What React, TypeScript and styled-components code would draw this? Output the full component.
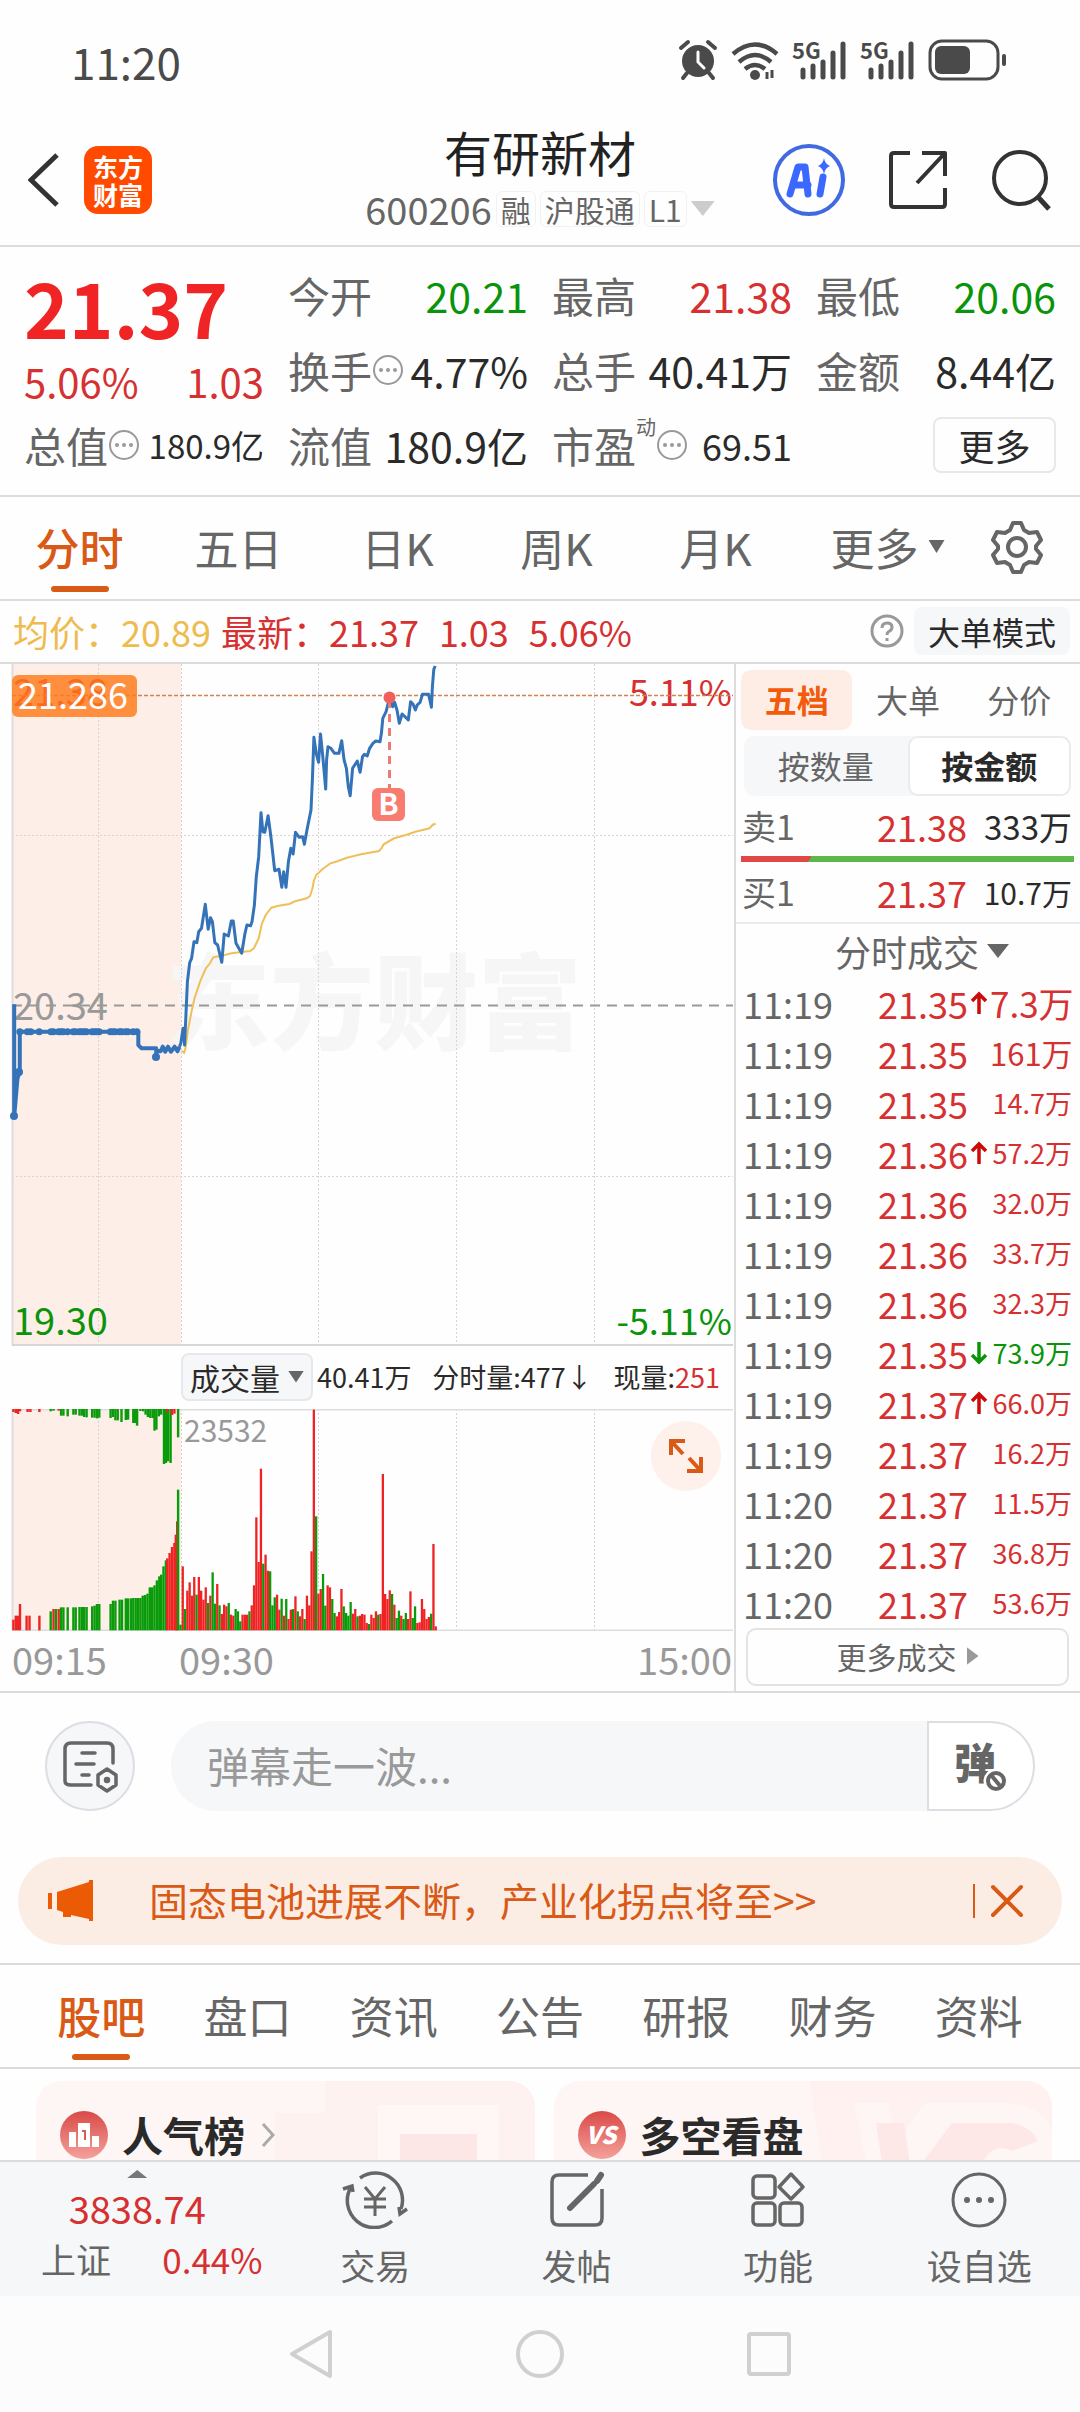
import React from "react";
import styled, { createGlobalStyle } from "styled-components";

const c = {
  red: "#d63031",
  hot: "#f02424",
  green: "#0a940a",
  orange: "#d95916",
  grey: "#666",
  faint: "#999",
  ink: "#2a2a2a",
  line: "#dcdcdc",
  mist: "#f6f7f9",
};

const GlobalStyle = createGlobalStyle`
  * { box-sizing: border-box; }
  body { margin: 0; background: #fefefe; }
  body, button, input {
    font-family: "Noto Sans CJK SC", "Noto Sans", sans-serif;
    color: ${c.ink};
  }
  button { border: 0; padding: 0; background: none; cursor: pointer; }
  svg { display: block; flex: none; }
`;

const Page = styled.div`
  display: flex;
  flex-direction: column;
  height: 100vh;
  overflow: hidden;
`;
const Content = styled.main`
  flex: 1;
  min-height: 0;
  overflow: hidden;
`;

/* ---------- status bar and header ---------- */
const StatusBar = styled.div`
  display: flex;
  align-items: center;
  justify-content: space-between;
  height: 104px;
  padding: 18px 73px 0 71px;
  font-size: 44px;
  line-height: 64px;
  color: #4a4a4a;
  svg { overflow: visible; }
`;
const Header = styled.header`
  display: grid;
  grid-template-columns: 1fr auto 1fr;
  align-items: center;
  height: 143px;
  padding: 0 28px;
  border-bottom: 2px solid ${c.line};
`;
const HeaderSide = styled.div<{ $end?: boolean }>`
  display: flex;
  align-items: center;
  gap: ${(p) => (p.$end ? 42 : 24)}px;
  justify-content: ${(p) => (p.$end ? "flex-end" : "flex-start")};
  padding-top: 10px;
`;
const Brand = styled.span`
  display: grid;
  place-content: center;
  width: 68px;
  height: 68px;
  border-radius: 14px;
  background: #ff4a00;
  color: #fff;
  font-size: 25px;
  font-weight: 700;
  line-height: 28px;
`;
const TitleBlock = styled.div`
  display: flex;
  flex-direction: column;
  align-items: center;
`;
const StockName = styled.h1`
  margin: 0;
  font-size: 48px;
  font-weight: 400;
  line-height: 68px;
  color: #222;
`;
const StockMeta = styled.div`
  display: flex;
  align-items: center;
  font-size: 38px;
  line-height: 48px;
  color: ${c.grey};
  gap: 4px;
`;
const Tag = styled.span`
  padding: 0 4px;
  border-radius: 6px;
  border: 1px solid #f2f2f2;
  font-size: 30px;
  line-height: 34px;
`;
const Caret = styled.i<{ $w: number; $h: number; $color: string; $up?: boolean }>`
  width: ${(p) => p.$w}px;
  height: ${(p) => p.$h}px;
  background: ${(p) => p.$color};
  clip-path: ${(p) => (p.$up ? "polygon(50% 0, 100% 100%, 0 100%)" : "polygon(0 0, 100% 0, 50% 100%)")};
`;

/* ---------- quote ---------- */
const Quote = styled.section`
  display: grid;
  grid-template-columns: repeat(4, 1fr);
  grid-template-rows: repeat(3, 75px);
  column-gap: 24px;
  padding: 10px 24px 13px;
  border-bottom: 2px solid ${c.line};
`;
const PriceBlock = styled.div`
  grid-row: span 2;
`;
const Price = styled.div`
  font-size: 76px;
  font-weight: 700;
  line-height: 98px;
  color: ${c.hot};
`;
const Change = styled.div`
  display: flex;
  justify-content: space-between;
  font-size: 40px;
  line-height: 52px;
  color: ${c.red};
`;
const Stat = styled.div`
  display: flex;
  align-items: center;
  line-height: 60px;
`;
const StatLabel = styled.span`
  display: flex;
  align-items: center;
  font-size: 42px;
  color: ${c.grey};
  white-space: nowrap;
`;
const Sup = styled.sup`
  align-self: flex-start;
  font-size: 20px;
  line-height: 24px;
`;
const StatValue = styled.span<{ $color?: string; $size?: number }>`
  margin-left: auto;
  font-size: ${(p) => p.$size ?? 41}px;
  color: ${(p) => p.$color ?? c.ink};
  white-space: nowrap;
`;
const MoreButton = styled.button`
  align-self: center;
  justify-self: end;
  width: 123px;
  height: 56px;
  border: 2px solid #e8e8e8;
  border-radius: 8px;
  font-size: 36px;
  line-height: 48px;
`;

/* ---------- tabs ---------- */
const PeriodTabs = styled.nav`
  display: grid;
  grid-template-columns: repeat(6, 1fr) 126px;
  height: 104px;
  border-bottom: 2px solid ${c.line};
`;
const BoardTabs = styled.nav`
  display: grid;
  grid-template-columns: repeat(7, 1fr);
  height: 106px;
  padding: 0 28px;
  border-top: 2px solid ${c.line};
  border-bottom: 2px solid ${c.line};
`;
const Tab = styled.button<{ $on?: boolean; $menu?: boolean }>`
  position: relative;
  display: flex;
  align-items: center;
  justify-content: center;
  gap: 10px;
  padding-left: ${(p) => (p.$menu ? 26 : 0)}px;
  padding-bottom: 3px;
  font-size: 44px;
  line-height: 60px;
  font-weight: ${(p) => (p.$on ? 500 : 400)};
  color: ${(p) => (p.$on ? c.orange : c.grey)};
  &::after {
    content: "";
    display: ${(p) => (p.$on ? "block" : "none")};
    position: absolute;
    bottom: 7px;
    width: 58px;
    height: 6px;
    border-radius: 3px;
    background: ${c.orange};
  }
`;

/* ---------- price line summary ---------- */
const Summary = styled.div`
  display: flex;
  align-items: center;
  height: 63px;
  padding: 0 10px 2px 13px;
  border-bottom: 2px solid ${c.line};
  font-size: 36px;
  line-height: 56px;
  white-space: nowrap;
`;
const Avg = styled.span`
  margin-right: 10px;
  color: #eebb4d;
`;
const Latest = styled.span`
  display: flex;
  gap: 20px;
  margin-right: auto;
  color: ${c.red};
`;
const ModeButton = styled.button`
  width: 156px;
  height: 48px;
  margin-left: 10px;
  border-radius: 8px;
  background: ${c.mist};
  font-size: 32px;
  line-height: 44px;
`;

/* ---------- market area ---------- */
const Market = styled.section`
  display: grid;
  grid-template-columns: minmax(0, 734fr) minmax(0, 346fr);
  border-bottom: 2px solid ${c.line};
`;
const ChartColumn = styled.div`
  position: relative;
`;
const Drawing = styled.svg`
  width: 100%;
  height: auto;
  font-size: 38px;
`;
const VolumeHead = styled.div`
  display: flex;
  align-items: center;
  gap: 4px;
  height: 63px;
  padding: 0 14px 2px 181px;
`;
const VolumePick = styled.button`
  display: flex;
  flex: none;
  align-items: center;
  justify-content: center;
  gap: 8px;
  width: 132px;
  height: 48px;
  border: 2px solid #e6e8ee;
  border-radius: 8px;
  background: ${c.mist};
  font-size: 30px;
  line-height: 40px;
`;
const VolumeStats = styled.div`
  display: flex;
  flex: 1;
  justify-content: space-between;
  font-size: 27px;
  white-space: nowrap;
  em { font-style: normal; color: ${c.red}; }
`;
const VolumeBox = styled.div`
  position: relative;
`;
const ExpandButton = styled.button`
  position: absolute;
  top: 12px;
  right: 13px;
  display: grid;
  place-content: center;
  width: 70px;
  height: 70px;
  border-radius: 50%;
  background: #fef0ea;
`;
const TimeAxis = styled.div`
  display: grid;
  grid-template-columns: 167px 1fr auto;
  height: 60px;
  padding: 0 2px 0 12px;
  font-size: 38px;
  line-height: 56px;
  color: ${c.faint};
`;

const Book = styled.aside`
  display: flex;
  flex-direction: column;
  border-left: 2px solid ${c.line};
`;
const BookTabs = styled.div`
  display: grid;
  grid-template-columns: repeat(3, 1fr);
  padding: 6px 5px 6px 5px;
`;
const BookTab = styled.button<{ $on?: boolean }>`
  height: 60px;
  padding-bottom: 2px;
  border-radius: 10px;
  background: ${(p) => (p.$on ? "#feede5" : "none")};
  color: ${(p) => (p.$on ? "#f25a0c" : c.grey)};
  font-size: 32px;
  font-weight: ${(p) => (p.$on ? 700 : 400)};
`;
const Segment = styled.div`
  display: grid;
  grid-template-columns: 1fr 1fr;
  margin: 0 9px 0 8px;
  border-radius: 10px;
  background: ${c.mist};
`;
const SegmentButton = styled.button<{ $on?: boolean }>`
  height: 60px;
  padding-bottom: 2px;
  border: 2px solid ${(p) => (p.$on ? "#ebebeb" : "transparent")};
  border-radius: 10px;
  background: ${(p) => (p.$on ? "#fff" : "none")};
  color: ${(p) => (p.$on ? c.ink : c.grey)};
  font-size: 32px;
  font-weight: ${(p) => (p.$on ? 700 : 400)};
`;
const Level = styled.div`
  display: grid;
  grid-template-columns: 66px 1fr 105px;
  align-items: center;
  height: 60px;
  padding: 0 8px 0 6px;
  font-size: 34px;
  line-height: 56px;
  color: ${c.grey};
  text-align: right;
  span:first-child { text-align: left; white-space: nowrap; }
`;
const LevelPrice = styled.span`
  font-size: 36px;
  color: ${c.red};
`;
const Amount = styled.span<{ $size: number }>`
  font-size: ${(p) => p.$size}px;
  color: ${c.ink};
`;
const Balance = styled.div`
  height: 6px;
  margin: 0 6px 0 5px;
  background: linear-gradient(120deg, #e04848 21%, #5cb848 21%);
`;
const TradesHead = styled.button`
  display: flex;
  align-items: center;
  justify-content: center;
  gap: 8px;
  height: 56px;
  padding-left: 28px;
  border-top: 2px solid #e9ebed;
  font-size: 36px;
  line-height: 52px;
  color: ${c.grey};
`;
const Trades = styled.table`
  width: 100%;
  table-layout: fixed;
  border-collapse: collapse;
  td {
    height: 50px;
    padding: 0;
    line-height: 48px;
    vertical-align: middle;
    white-space: nowrap;
  }
`;
const TimeCell = styled.td`
  width: 117px;
  && { padding-left: 7px; }
  font-size: 36px;
  color: ${c.grey};
`;
const PriceCell = styled.td`
  width: 115px;
  font-size: 36px;
  color: ${c.red};
  text-align: right;
`;
const ArrowCell = styled.td`
  width: 22px;
  svg { margin: 0 auto; }
`;
const AmountCell = styled.td<{ $size: number; $down: boolean }>`
  && { padding-right: 8px; }
  font-size: ${(p) => p.$size}px;
  color: ${(p) => (p.$down ? c.green : c.red)};
  text-align: right;
`;
const MoreTrades = styled.button`
  display: flex;
  align-items: center;
  justify-content: center;
  gap: 10px;
  height: 58px;
  margin: 0 11px 0 10px;
  padding-bottom: 2px;
  border: 2px solid #e3e3e3;
  border-radius: 10px;
  font-size: 30px;
  color: ${c.grey};
`;
const Play = styled.i`
  width: 12px;
  height: 18px;
  background: ${c.faint};
  clip-path: polygon(0 0, 100% 50%, 0 100%);
`;

/* ---------- comment box and notice ---------- */
const Danmu = styled.form`
  display: flex;
  height: 146px;
  padding: 28px 45px;
`;
const RoundButton = styled.button`
  display: grid;
  place-content: center;
  width: 90px;
  height: 90px;
  margin-right: 36px;
  border: 2px solid #dcdee4;
  border-radius: 50%;
  background: ${c.mist};
`;
const DanmuInput = styled.input`
  flex: 1;
  min-width: 0;
  height: 90px;
  padding: 0 36px 3px;
  border: 0;
  border-radius: 45px 0 0 45px;
  background: ${c.mist};
  font-size: 42px;
  &::placeholder { color: ${c.faint}; opacity: 1; }
`;
const DanmuToggle = styled.button`
  display: grid;
  place-content: center;
  width: 108px;
  height: 90px;
  border: 2px solid #dcdee4;
  border-radius: 0 45px 45px 0;
  background: #fff;
`;
const Notice = styled.div`
  display: flex;
  align-items: center;
  height: 88px;
  margin: 18px;
  padding: 0 38px 0 29px;
  border-radius: 44px;
  background: #fcede4;
`;
const NoticeLink = styled.a`
  flex: 1;
  margin-left: 54px;
  padding-bottom: 4px;
  font-size: 39px;
  line-height: 60px;
  color: ${c.orange};
  text-decoration: none;
  white-space: nowrap;
`;
const NoticeClose = styled.button`
  padding-left: 15px;
  border-left: 2px solid ${c.orange};
`;

/* ---------- cards ---------- */
const Cards = styled.section`
  display: grid;
  grid-template-columns: 1fr 1fr;
  gap: 19px;
  padding: 12px 28px 12px 36px;
`;
const Card = styled.article`
  position: relative;
  display: flex;
  align-items: center;
  height: 240px;
  padding: 0 24px 132px;
  border-radius: 26px;
  background: #fef6f4;
  overflow: hidden;
`;
const CardArt = styled.svg`
  position: absolute;
  top: 0;
  right: 0;
`;
const CardTitle = styled.h2`
  position: relative;
  margin: 0 16px 0 14px;
  padding-bottom: 3px;
  font-size: 41px;
  font-weight: 700;
  line-height: 60px;
`;

/* ---------- bottom ---------- */
const BottomBar = styled.nav`
  display: grid;
  grid-template-columns: 274fr repeat(4, 201fr);
  height: 136px;
  border-top: 2px solid ${c.line};
  background: ${c.mist};
`;
const IndexBox = styled.div`
  display: flex;
  flex-direction: column;
  align-items: center;
  padding-top: 8px;
  color: ${c.red};
`;
const IndexValue = styled.span`
  margin-top: 2px;
  font-size: 38px;
  line-height: 56px;
`;
const IndexRow = styled.div`
  display: flex;
  justify-content: space-between;
  width: 100%;
  padding: 0 12px 0 41px;
  font-size: 35px;
  line-height: 46px;
  span:first-child { color: ${c.grey}; }
`;
const BarItem = styled.button`
  display: flex;
  flex-direction: column;
  align-items: center;
  padding-top: 9px;
  font-size: 35px;
  line-height: 48px;
  color: ${c.grey};
  svg { margin-bottom: 12px; }
`;
const SystemNav = styled.div`
  display: flex;
  justify-content: center;
  align-items: center;
  gap: 182px;
  height: 116px;
  background: #fcfcfc;
`;

/* ---------- icons ---------- */
const StatusIcons = () => (
  <svg width="328" height="44" viewBox="0 0 328 44" fill="none" stroke="#4a4a4a" aria-hidden="true">
    <circle cx="19" cy="22" r="16" fill="#4a4a4a" stroke="none" />
    <path d="M2 9 9 3M36 9 29 3M8 34l-4 5M30 34l4 5" strokeWidth="4" strokeLinecap="round" />
    <path d="M19 13v10l6 6" stroke="#fff" strokeWidth="3" strokeLinecap="round" />
    <path d="M54 15q22-19 44 0M60 23q16-14 32 0M66 30q10-8 20 0" strokeWidth="4.5" />
    <circle cx="76" cy="36" r="5" fill="#4a4a4a" stroke="none" />
    <path d="M88 33v7M93 31v8" strokeWidth="3" />
    {[0, 68].map((x) => (
      <g key={x}>
        <text x={113 + x} y="20" fontSize="22" fontWeight="700" fill="#4a4a4a" stroke="none">5G</text>
        <path
          d={`M${124 + x} 31v7M${134 + x} 27v11M${144 + x} 23v15M${154 + x} 14v24M${164 + x} 5v33`}
          strokeWidth="5"
          strokeLinecap="round"
        />
      </g>
    ))}
    <rect x="251" y="2" width="68" height="38" rx="12" strokeWidth="3" />
    <rect x="256" y="7" width="35" height="28" rx="6" fill="#4a4a4a" stroke="none" />
    <path d="M325 17v8" strokeWidth="4" strokeLinecap="round" />
  </svg>
);
const BackIcon = () => (
  <svg width="32" height="56" viewBox="0 0 32 56" fill="none" stroke="#333" strokeWidth="5">
    <path d="M29 3 3 28l26 25" />
  </svg>
);
const AiIcon = () => (
  <svg width="74" height="74" viewBox="0 0 74 74">
    <circle cx="37" cy="37" r="34" fill="none" stroke="#4169e1" strokeWidth="4" />
    <path
      d="M18 51 26 24h7l3 27M22 42h14M51 34l-3 17"
      fill="none"
      stroke="#3b68ff"
      strokeWidth="7"
      strokeLinejoin="round"
      strokeLinecap="round"
    />
    <path d="M52 15q1 6 6 8q-5 2-6 8q-1-6-6-8q5-2 6-8z" fill="#3b68ff" />
  </svg>
);
const ShareIcon = () => (
  <svg width="60" height="60" viewBox="0 0 60 60" fill="none" stroke="#333" strokeWidth="4">
    <path d="M22 3H6q-3 0-3 3v48q0 3 3 3h48q3 0 3-3V38M34 3h23v23M57 3 29 33" strokeLinejoin="round" />
  </svg>
);
const SearchIcon = () => (
  <svg width="62" height="62" viewBox="0 0 62 62" fill="none" stroke="#333" strokeWidth="4">
    <circle cx="30" cy="29" r="26" />
    <path d="m48 48 11 12" strokeWidth="5" />
  </svg>
);
const DotsIcon = () => (
  <svg width="32" height="32" viewBox="0 0 32 32">
    <circle cx="16" cy="16" r="14" fill="none" stroke="#999" strokeWidth="2" />
    <g fill="#999">
      <circle cx="9" cy="16" r="2" />
      <circle cx="16" cy="16" r="2" />
      <circle cx="23" cy="16" r="2" />
    </g>
  </svg>
);
const GearIcon = () => (
  <svg width="54" height="54" viewBox="0 0 54 54" fill="none" stroke="#666" strokeWidth="4" strokeLinejoin="round">
    <path d="M23 3h8l3 7 5 3 8-1 4 8-5 6v3l5 6-4 8-8-1-5 3-3 7h-8l-3-7-5-3-8 1-4-8 5-6v-3l-5-6 4-8 8 1 5-3z" />
    <circle cx="27" cy="27" r="9" />
  </svg>
);
const HelpIcon = () => (
  <svg width="34" height="34" viewBox="0 0 34 34" fill="none" stroke="#999" strokeWidth="3">
    <circle cx="17" cy="17" r="15" />
    <path d="M12 14q0-5 5-5t5 4q0 3-3 4.500-2 1-2 3.500M17 24v3" />
  </svg>
);
const Arrow = ({ up }: { up: boolean }) => (
  <svg width="18" height="24" viewBox="0 0 18 24" fill="none" stroke={up ? "#cc0a0a" : c.green} strokeWidth="3.500">
    <path d={up ? "M9 23V3M2 10l7-7 7 7" : "M9 1v20M2 14l7 7 7-7"} />
  </svg>
);
const ExpandIcon = () => (
  <svg width="38" height="38" viewBox="0 0 38 38" fill="none" stroke={c.orange} strokeWidth="4">
    <path d="M18 4H4v14M4 4l12 13M20 34h14V20M34 34 22 21" />
  </svg>
);
const NoteIcon = () => (
  <svg width="56" height="54" viewBox="0 0 56 54" fill="none" stroke="#666" strokeWidth="3.500" strokeLinecap="round">
    <path d="M51 24V10q0-6-6-6H9q-6 0-6 6v32q0 4 6 4h20M20 14h13M14 25h18M20 36h7" />
    <path d="m45 30 9 6v10l-9 6-9-6V36z" strokeLinejoin="round" />
    <circle cx="45" cy="41" r="1.500" fill="#666" />
  </svg>
);
const DanmuIcon = () => (
  <svg width="54" height="54" viewBox="0 0 54 54" overflow="visible">
    <text x="0" y="40" fontSize="42" fontWeight="900" fill="#666">弹</text>
    <circle cx="42" cy="42" r="9" fill="#fff" stroke="#fff" strokeWidth="7" />
    <circle cx="42" cy="42" r="8" fill="none" stroke="#666" strokeWidth="4" />
    <path d="m37 36 10 12" stroke="#666" strokeWidth="4" />
  </svg>
);
const HornIcon = () => (
  <svg width="48" height="42" viewBox="0 0 48 42" fill="#eb5a05">
    <path d="M1 13h4v16H1zM10 12 42 2V0h4v41h-4v-2l-18-4v2h-8v-5l-6-2z" />
  </svg>
);
const CloseIcon = () => (
  <svg width="34" height="34" viewBox="0 0 34 34" stroke={c.orange} strokeWidth="4" strokeLinecap="round">
    <path d="m3 3 28 28M31 3 3 31" />
  </svg>
);
const RankIcon = () => (
  <svg width="48" height="48" viewBox="0 0 48 48">
    <defs>
      <linearGradient id="badge" x1="0" y1="0" x2="0" y2="1">
        <stop offset="0" stopColor="#d94a47" />
        <stop offset="1" stopColor="#f4a19b" />
      </linearGradient>
    </defs>
    <circle cx="24" cy="24" r="24" fill="url(#badge)" />
    <path d="M9 21h7v15H9zM18 12h12v24H18zM32 25h7v11h-7z" fill="#fff" />
    <path d="M22 20h3v9" fill="none" stroke="#dc5a56" strokeWidth="2" />
  </svg>
);
const VsIcon = () => (
  <svg width="48" height="48" viewBox="0 0 48 48">
    <circle cx="24" cy="24" r="24" fill="url(#badge)" />
    <text x="23" y="33" textAnchor="middle" fontSize="24" fontWeight="900" fontStyle="italic" fill="#fff">VS</text>
  </svg>
);
const TradeIcon = () => (
  <svg width="66" height="58" viewBox="0 0 66 58" fill="none" stroke="#666" strokeWidth="3.500">
    <path d="M18 7A27 27 0 0 1 59 38M50 50A27 27 0 0 1 9 16M1 18l9-3 1 6M65 38l-7 5-1-7" />
    <path d="m23 16 10 12 10-12M33 28v17M22 28h22M22 36h22" strokeWidth="3" />
  </svg>
);
const PostIcon = () => (
  <svg width="58" height="58" viewBox="0 0 58 58" fill="none" stroke="#666" strokeWidth="3.500">
    <path d="M40 4H11q-7 0-7 7v36q0 7 7 7h36q7 0 7-7V18" />
    <path d="m49 10 4-6M22 37l24-24" strokeWidth="6" strokeLinecap="round" />
  </svg>
);
const GridIcon = () => (
  <svg width="58" height="58" viewBox="0 0 58 58" fill="none" stroke="#666" strokeWidth="3.500" strokeLinejoin="round">
    <rect x="4" y="5" width="22" height="22" rx="4" />
    <rect x="4" y="32" width="22" height="22" rx="4" />
    <rect x="31" y="32" width="22" height="22" rx="4" />
    <path d="m42 3 12 13-12 12-12-12z" />
  </svg>
);
const MoreIcon = () => (
  <svg width="58" height="58" viewBox="0 0 58 58">
    <circle cx="29" cy="29" r="26" fill="none" stroke="#666" strokeWidth="3" />
    <g fill="#666">
      <circle cx="17" cy="29" r="3" />
      <circle cx="29" cy="29" r="3" />
      <circle cx="41" cy="29" r="3" />
    </g>
  </svg>
);

/* ---------- chart data ---------- */
type Pt = [number, number];
const preOpen: Pt[] = [[30, 1033], [30, 1370], [37, 1255], [42, 1235], [42, 1115], [293, 1115], [293, 1155], [300, 1165], [331, 1165], [331, 1194], [331, 1172], [340, 1174], [345, 1160], [350, 1175], [356, 1160], [362, 1175], [370, 1160], [376, 1174], [380, 1160]];
const session: Pt[] = [[380, 1160], [383, 1150], [388, 1105], [391, 1155], [397, 965], [402, 908], [406, 895], [411, 845], [417, 848], [421, 815], [427, 805], [435, 733], [441, 808], [446, 773], [450, 785], [455, 848], [461, 855], [470, 907], [475, 822], [484, 828], [490, 783], [494, 783], [500, 850], [512, 880], [519, 820], [523, 795], [531, 797], [534, 785], [539, 735], [543, 650], [548, 590], [553, 458], [557, 515], [561, 517], [568, 467], [574, 530], [582, 632], [591, 628], [597, 682], [601, 635], [606, 682], [611, 605], [616, 565], [621, 582], [626, 517], [634, 532], [641, 530], [645, 553], [651, 505], [659, 450], [662, 350], [665, 232], [670, 280], [675, 307], [679, 222], [684, 290], [690, 387], [692, 300], [695, 260], [701, 265], [709, 280], [718, 280], [724, 242], [729, 300], [734, 325], [738, 380], [742, 407], [747, 325], [757, 303], [763, 337], [768, 290], [772, 283], [778, 288], [783, 265], [790, 250], [796, 243], [805, 245], [808, 220], [811, 175], [818, 155], [825, 115], [832, 140], [836, 127], [841, 150], [846, 190], [852, 162], [858, 170], [865, 180], [870, 125], [875, 132], [880, 150], [884, 135], [890, 127], [895, 103], [908, 103], [914, 142], [916, 80], [919, 28], [922, 18]];
const average: Pt[] = [[385, 1172], [390, 1178], [393, 1165], [398, 1110], [405, 1060], [412, 1015], [424, 965], [436, 925], [445, 910], [452, 892], [470, 887], [490, 880], [530, 873], [538, 865], [548, 835], [555, 790], [563, 765], [575, 743], [590, 737], [613, 732], [625, 724], [650, 715], [657, 708], [662, 685], [665, 662], [670, 645], [683, 628], [700, 610], [715, 604], [735, 593], [765, 583], [803, 573], [808, 565], [813, 553], [835, 535], [860, 525], [880, 515], [910, 505], [917, 494], [923, 491]];
const sx = (v: number) => Math.round(v * 4.72) / 10;
const sy = (v: number) => Math.round(v / 0.3) / 10 - 4;
const line = (pts: Pt[]) => pts.map(([x, y]) => `${sx(x)},${sy(y)}`).join(" ");

const quoteDots = [42, 58, 65, 83, 108, 113, 124, 129, 134, 143, 155, 160, 168, 173, 178, 183, 195, 200, 205, 210, 234, 239, 244, 253, 258, 266, 271, 282, 290];

const volume =
  "r680 g808 r753 r728 r768 r712 g765 r712 r753 r780 r743 g790 r768 g698 g792 r733 g797 r823 r795 r800 g790 r825 r828 g808 g815 g845 r825 r825 r825 g815 r797 r737 r533 r667 r387 g672 r645 r693 g695 g797 g773 r765 r810 g777 r828 g778 r838 r810 g808 r770 g815 r830 r808 g838 r768 r797 r635 r210 g530 r762 r748 g703 g798 r737 r743 g778 g820 r830 r817 r748 g800 g820 g828 g787 r822 r808 g830 r828 r823 r825 r850 g853 r825 r835 r815 g825 r823 r403 r763 r778 r752 g763 r795 g835 g813 r828 g838 g820 r838 r755 g835 g800 r850 r848 r778 r808 r838 r832 g822 r613 r860".split(" ");
const auction =
  "28r840 33r828 38r828 42r793 56r828 62r828 83r828 107g815 113r808 118g808 124r808 129g803 134g803 143g803 155g803 160g803 168g802 173g802 178g802 183g802 195g800 200g798 205g793 210g793 234g793 239g783 244g783 253g780 258g780 266g776 271g776 277g776 282g775 287g775 292g775 297g775 302g768 307g766 312g762 317g743 322g743 327g737 332g722 337g710 341g705 346g680 351g662 354r656 359r640 364r622 369r610 372r585 375r545 377g450 382g855".split(" ");
const unmatched =
  "28r217 33r220 38r223 42r215 58r217 64r217 83r217 107g215 113g213 124r213 129g228 134g228 143g230 155g225 160g225 168g228 173g228 178g232 183g233 195g234 200g234 205g236 210g234 234g235 239g232 244g242 249g242 257g247 266g241 271g240 282g250 286g250 290g258 297g214 303g215 308g225 313g232 318g235 323g235 327g273 331g270 336g230 341g225 347g373 351g370 356g365 361g370 354r218 364r226 369r222 377g293".split(" ");
const tone = { r: "#ee2424", g: "#0a9b0a" } as Record<string, string>;
const split = (s: string) => {
  const [, x, k, y] = s.match(/(\d+)([rg])(\d+)/)!;
  return { x: +x, fill: tone[k], h: +y };
};

const PriceChart = () => (
  <Drawing viewBox="0 0 734 682" role="img" aria-label="分时走势">
    <rect x="12" y="0" width="169" height="681" fill="#fdeee8" />
    <text x="166" y="378" fontSize="104" fontWeight="900" fill="#f6f6f6">东方财富</text>
    <g stroke="#d8d4d2" strokeWidth="1" strokeDasharray="2 2">
      {[98, 181, 318, 456, 594].map((x) => <path key={x} d={`M${x}.5 0V681`} />)}
      <path d="M12 171.500H733M12 512.500H733" />
    </g>
    <path d="M12.500 0V681" stroke={c.line} strokeWidth="2" />
    <path d="M12 681H733" stroke="#d6d6d6" strokeWidth="2" />
    <text x="13" y="42" fill={c.red}>21.38</text>
    <text x="732" y="42" fontSize="36" textAnchor="end" fill={c.red}>5.11%</text>
    <text x="13" y="356" fill={c.faint}>20.34</text>
    <text x="13" y="671" fill={c.green}>19.30</text>
    <text x="732" y="671" fontSize="36" textAnchor="end" fill={c.green}>-5.11%</text>
    <path d="M12 341.500H733" stroke="#999" strokeWidth="2" strokeDasharray="10 7" />
    <path d="M12 31.500H733" stroke="#cf8350" strokeWidth="1.500" strokeDasharray="4 2" />
    <polyline points={line(average)} fill="none" stroke="#efc05a" strokeWidth="2" />
    <polyline points={line(preOpen)} fill="none" stroke="#3573b9" strokeWidth="4" strokeLinejoin="round" />
    <g fill="#3573b9">
      {quoteDots.map((x) => <circle key={x} cx={sx(x)} cy={sy(1115)} r="3.500" />)}
      <circle cx="14" cy="452" r="4" />
      <circle cx="19" cy="408" r="4" />
      <circle cx="156" cy="393" r="4" />
    </g>
    <polyline points={line(session)} fill="none" stroke="#3573b9" strokeWidth="3" strokeLinejoin="round" />
    <path d="M389.500 36V124" stroke="#ef7a70" strokeWidth="3" strokeDasharray="8 6" />
    <circle cx="389.500" cy="33.500" r="6" fill="#f0605a" />
    <rect x="372" y="124" width="33" height="33" rx="6" fill="#f87c70" />
    <text x="388.500" y="151" fontSize="30" fontWeight="700" textAnchor="middle" fill="#fff">B</text>
    <rect x="12" y="11" width="125" height="42" rx="6" fill="#ff7a1a" fillOpacity="0.82" />
    <text x="18" y="45" fontSize="36" fill="#fff">21.286</text>
  </Drawing>
);

const VolumeChart = () => (
  <Drawing viewBox="0 0 734 222" role="img" aria-label="成交量">
    <rect x="12" y="0" width="169" height="221" fill="#fdeee8" />
    <g stroke="#d8d4d2" strokeWidth="1" strokeDasharray="2 2">
      {[98, 181, 318, 456, 594].map((x) => <path key={x} d={`M${x}.5 0V221`} />)}
    </g>
    <path d="M12 .5H733M12 221.500H733M12.500 0V221" stroke="#ddd" strokeWidth="2" />
    {auction.map(split).map((b, i) => (
      <rect key={i} x={sx(b.x) - 1} y={(b.h - 208) / 3} width="2.400" height={(872 - b.h) / 3} fill={b.fill} />
    ))}
    {unmatched.map(split).map((b, i) => (
      <rect key={i} x={sx(b.x) - 1} y="-1" width="2.400" height={(b.h - 205) / 3} fill={b.fill} />
    ))}
    {volume.map((v, i) => {
      const top = +v.slice(1);
      return <rect key={i} x={181.600 + i * 2.300} y={(top - 208) / 3} width="2.300" height={(872 - top) / 3} fill={tone[v[0]]} />;
    })}
    <text x="184" y="33" fontSize="30" fill={c.faint}>23532</text>
  </Drawing>
);

/* ---------- content ---------- */
const trades: [string, string, "" | "up" | "down", string, number][] = [
  ["11:19", "21.35", "up", "7.3万", 35],
  ["11:19", "21.35", "", "161万", 31],
  ["11:19", "21.35", "", "14.7万", 27],
  ["11:19", "21.36", "up", "57.2万", 27],
  ["11:19", "21.36", "", "32.0万", 27],
  ["11:19", "21.36", "", "33.7万", 27],
  ["11:19", "21.36", "", "32.3万", 27],
  ["11:19", "21.35", "down", "73.9万", 27],
  ["11:19", "21.37", "up", "66.0万", 27],
  ["11:19", "21.37", "", "16.2万", 27],
  ["11:20", "21.37", "", "11.5万", 27],
  ["11:20", "21.37", "", "36.8万", 27],
  ["11:20", "21.37", "", "53.6万", 27],
];

export default function App() {
  return (
    <Page>
      <GlobalStyle />
      <StatusBar>
        <span>11:20</span>
        <StatusIcons />
      </StatusBar>
      <Header>
        <HeaderSide>
          <button aria-label="返回"><BackIcon /></button>
          <Brand><span>东方</span><span>财富</span></Brand>
        </HeaderSide>
        <TitleBlock>
          <StockName>有研新材</StockName>
          <StockMeta>
            600206
            <Tag>融</Tag>
            <Tag>沪股通</Tag>
            <Tag>L1</Tag>
            <Caret $w={24} $h={15} $color="#ccc" />
          </StockMeta>
        </TitleBlock>
        <HeaderSide $end>
          <button aria-label="AI"><AiIcon /></button>
          <button aria-label="分享"><ShareIcon /></button>
          <button aria-label="搜索"><SearchIcon /></button>
        </HeaderSide>
      </Header>

      <Content>
        <Quote>
          <PriceBlock>
            <Price>21.37</Price>
            <Change><span>5.06%</span><span>1.03</span></Change>
          </PriceBlock>
          <Stat><StatLabel>今开</StatLabel><StatValue $color={c.green}>20.21</StatValue></Stat>
          <Stat><StatLabel>最高</StatLabel><StatValue $color={c.red}>21.38</StatValue></Stat>
          <Stat><StatLabel>最低</StatLabel><StatValue $color={c.green}>20.06</StatValue></Stat>
          <Stat><StatLabel>换手<DotsIcon /></StatLabel><StatValue>4.77%</StatValue></Stat>
          <Stat><StatLabel>总手</StatLabel><StatValue>40.41万</StatValue></Stat>
          <Stat><StatLabel>金额</StatLabel><StatValue>8.44亿</StatValue></Stat>
          <Stat><StatLabel>总值<DotsIcon /></StatLabel><StatValue $size={33}>180.9亿</StatValue></Stat>
          <Stat><StatLabel>流值</StatLabel><StatValue>180.9亿</StatValue></Stat>
          <Stat><StatLabel>市盈<Sup>动</Sup><DotsIcon /></StatLabel><StatValue $size={36}>69.51</StatValue></Stat>
          <MoreButton>更多</MoreButton>
        </Quote>

        <PeriodTabs>
          <Tab $on>分时</Tab>
          <Tab>五日</Tab>
          <Tab>日K</Tab>
          <Tab>周K</Tab>
          <Tab>月K</Tab>
          <Tab $menu>更多<Caret $w={16} $h={13} $color="#666" /></Tab>
          <Tab aria-label="设置"><GearIcon /></Tab>
        </PeriodTabs>

        <Summary>
          <Avg>均价：20.89</Avg>
          <Latest><span>最新：21.37</span><span>1.03</span><span>5.06%</span></Latest>
          <HelpIcon />
          <ModeButton>大单模式</ModeButton>
        </Summary>

        <Market>
          <ChartColumn>
            <PriceChart />
            <VolumeHead>
              <VolumePick>成交量<Caret $w={16} $h={12} $color="#666" /></VolumePick>
              <VolumeStats>
                <span>40.41万</span>
                <span>分时量:477↓</span>
                <span>现量:<em>251</em></span>
              </VolumeStats>
            </VolumeHead>
            <VolumeBox>
              <VolumeChart />
              <ExpandButton aria-label="展开"><ExpandIcon /></ExpandButton>
            </VolumeBox>
            <TimeAxis><span>09:15</span><span>09:30</span><span>15:00</span></TimeAxis>
          </ChartColumn>

          <Book>
            <BookTabs>
              <BookTab $on>五档</BookTab>
              <BookTab>大单</BookTab>
              <BookTab>分价</BookTab>
            </BookTabs>
            <Segment>
              <SegmentButton>按数量</SegmentButton>
              <SegmentButton $on>按金额</SegmentButton>
            </Segment>
            <Level><span>卖1</span><LevelPrice>21.38</LevelPrice><Amount $size={33}>333万</Amount></Level>
            <Balance />
            <Level><span>买1</span><LevelPrice>21.37</LevelPrice><Amount $size={30}>10.7万</Amount></Level>
            <TradesHead>分时成交<Caret $w={22} $h={14} $color="#666" /></TradesHead>
            <Trades>
              <tbody>
                {trades.map(([time, price, dir, amount, size], i) => (
                  <tr key={i}>
                    <TimeCell>{time}</TimeCell>
                    <PriceCell>{price}</PriceCell>
                    <ArrowCell>{dir && <Arrow up={dir === "up"} />}</ArrowCell>
                    <AmountCell $size={size} $down={dir === "down"}>{amount}</AmountCell>
                  </tr>
                ))}
              </tbody>
            </Trades>
            <MoreTrades>更多成交<Play /></MoreTrades>
          </Book>
        </Market>

        <Danmu onSubmit={(e) => e.preventDefault()}>
          <RoundButton type="button" aria-label="弹幕设置"><NoteIcon /></RoundButton>
          <DanmuInput aria-label="弹幕" placeholder="弹幕走一波..." />
          <DanmuToggle type="button" aria-label="关闭弹幕"><DanmuIcon /></DanmuToggle>
        </Danmu>

        <Notice>
          <HornIcon />
          <NoticeLink href="#">固态电池进展不断，产业化拐点将至&gt;&gt;</NoticeLink>
          <NoticeClose aria-label="关闭"><CloseIcon /></NoticeClose>
        </Notice>

        <BoardTabs>
          {["股吧", "盘口", "资讯", "公告", "研报", "财务", "资料"].map((t, i) => (
            <Tab key={t} $on={i === 0}>{t}</Tab>
          ))}
        </BoardTabs>

        <Cards>
          <Card>
            <CardArt width="260" height="82" viewBox="0 0 260 82">
              <path d="M50 0H260V82H0V32H50z" fill="#fef2f0" />
              <path d="M103 24H224V82H103z" fill="#fef7f5" />
              <path d="M125 53H202V82H125z" fill="#fde7e6" />
            </CardArt>
            <RankIcon />
            <CardTitle>人气榜</CardTitle>
            <svg width="14" height="26" viewBox="0 0 14 26" fill="none" stroke="#aaa" strokeWidth="3">
              <path d="m2 2 10 11L2 24" />
            </svg>
          </Card>
          <Card>
            <CardArt width="242" height="82" viewBox="0 0 242 82">
              <path d="M0 0H242V82H12z" fill="#fef1ef" />
              <path d="M44 22H78L88 60 114 22H200q38 6 42 30V82H56z" fill="#fef6f5" />
              <path d="M66 42H94L100 82H72zM142 42h60q20 4 26 18l-26 10q-18-10-30 12h-60z" fill="#fde8e7" />
            </CardArt>
            <VsIcon />
            <CardTitle>多空看盘</CardTitle>
          </Card>
        </Cards>
      </Content>

      <BottomBar>
        <IndexBox>
          <Caret $w={20} $h={8} $color="#777" $up />
          <IndexValue>3838.74</IndexValue>
          <IndexRow><span>上证</span><span>0.44%</span></IndexRow>
        </IndexBox>
        <BarItem><TradeIcon />交易</BarItem>
        <BarItem><PostIcon />发帖</BarItem>
        <BarItem><GridIcon />功能</BarItem>
        <BarItem><MoreIcon />设自选</BarItem>
      </BottomBar>
      <SystemNav>
        <button aria-label="后退">
          <svg width="46" height="50" viewBox="0 0 46 50" fill="none" stroke="#d0d0d0" strokeWidth="4" strokeLinejoin="round">
            <path d="M42 3v44L4 25z" />
          </svg>
        </button>
        <button aria-label="主页">
          <svg width="48" height="50" viewBox="0 0 48 50" fill="none" stroke="#d0d0d0" strokeWidth="4">
            <circle cx="24" cy="25" r="22" />
          </svg>
        </button>
        <button aria-label="最近任务">
          <svg width="46" height="50" viewBox="0 0 46 50" fill="none" stroke="#d0d0d0" strokeWidth="4">
            <rect x="3" y="5" width="40" height="40" rx="2" />
          </svg>
        </button>
      </SystemNav>
    </Page>
  );
}
